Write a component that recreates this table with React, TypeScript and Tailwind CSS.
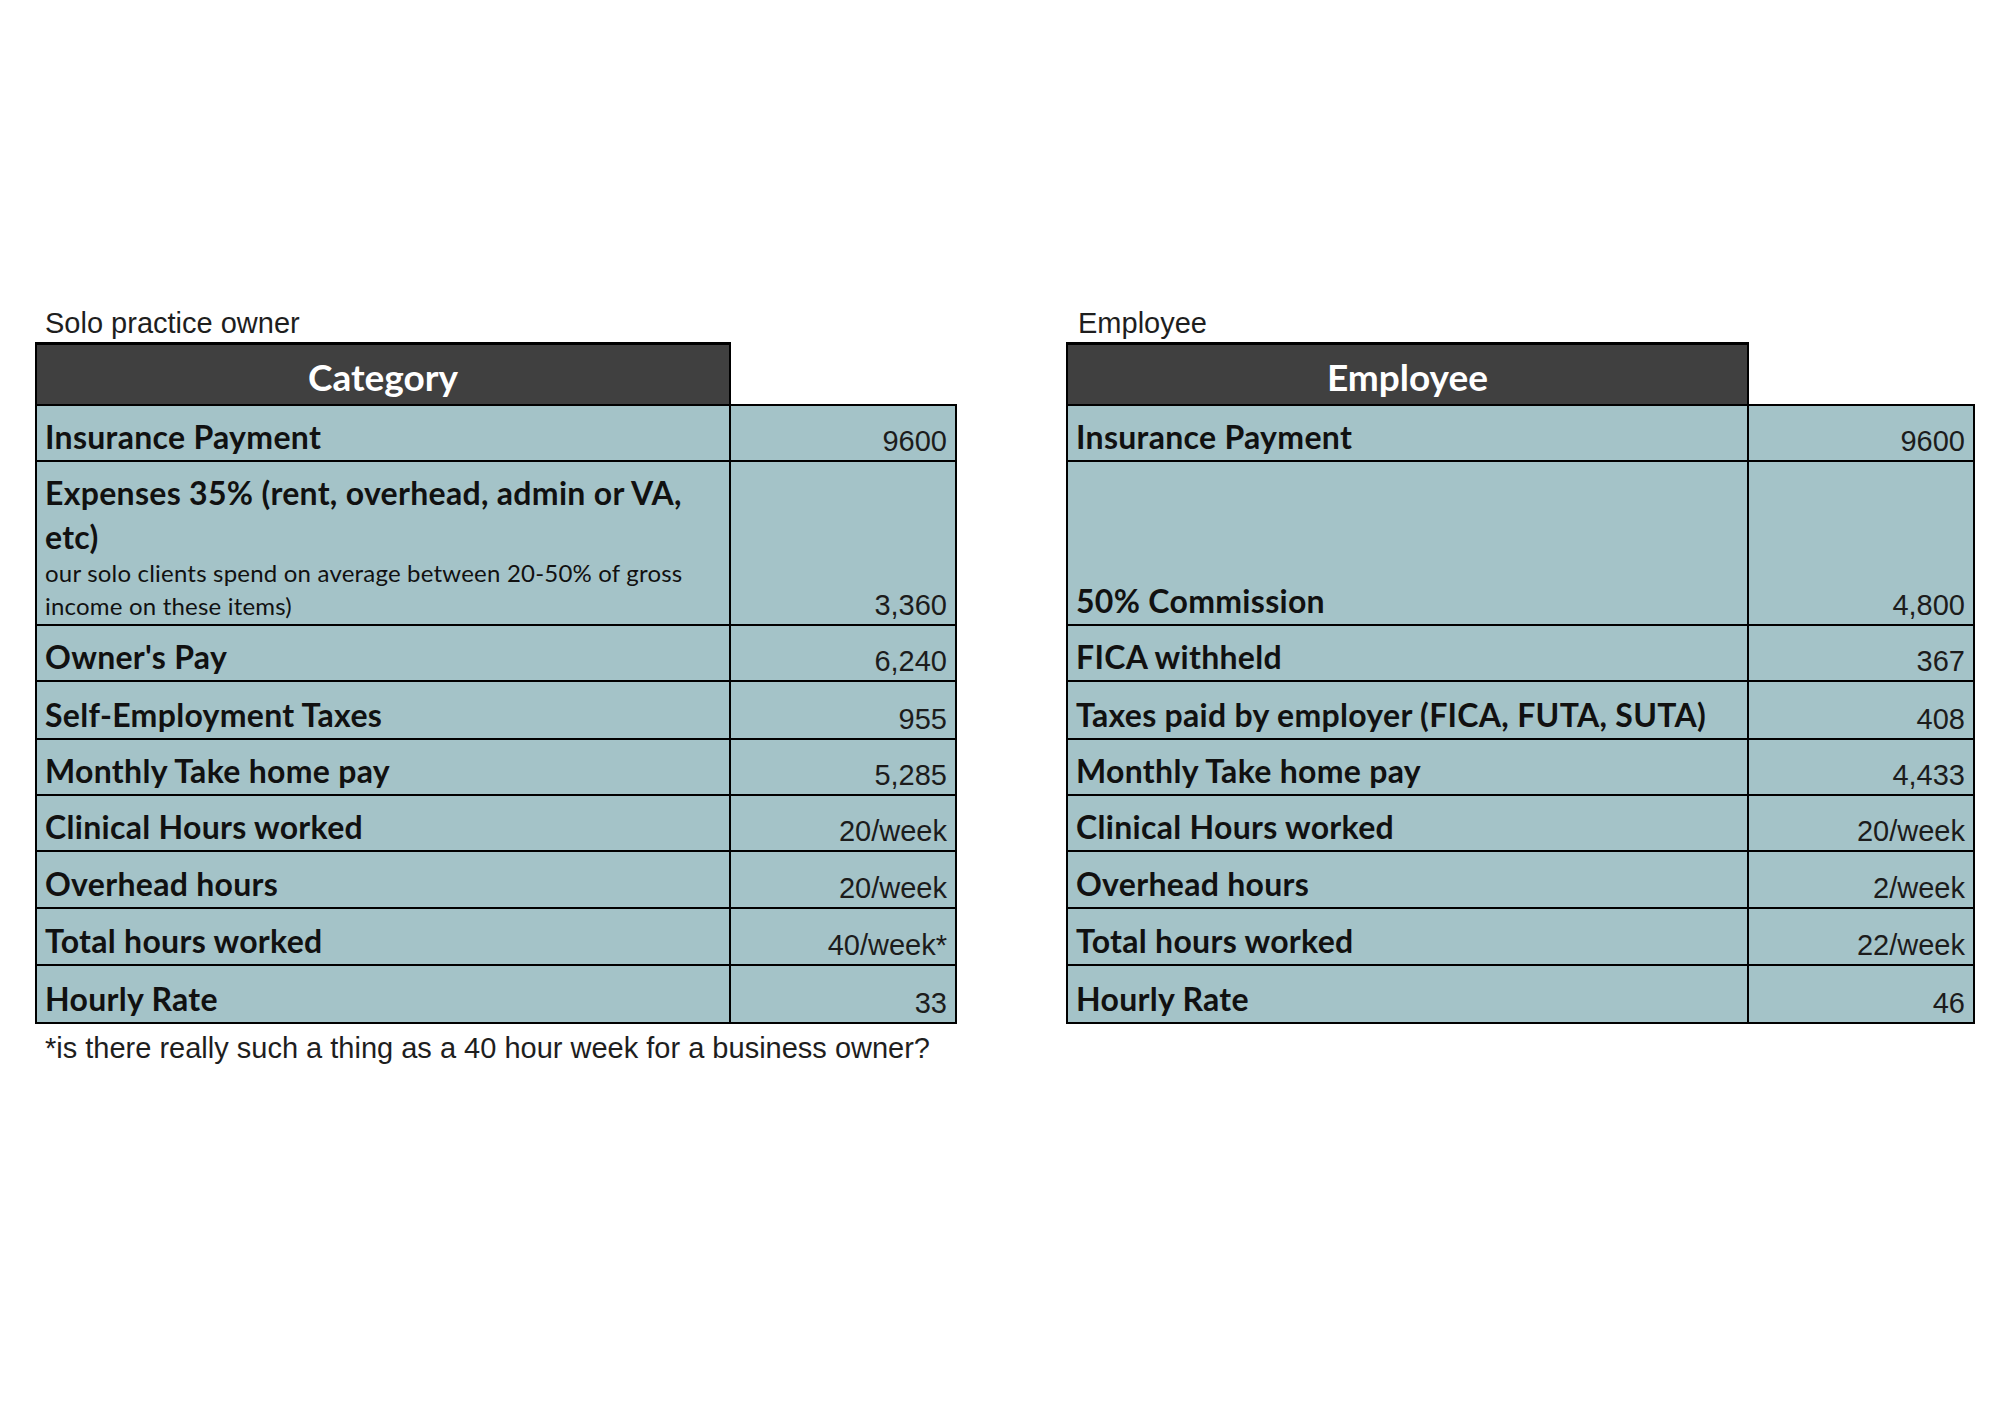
const soloRows = [
  { label: 'Insurance Payment', value: '9600', h: 'h-[58px]' },
  { label: 'Expenses', value: '3,360', h: 'h-[164px]' },
  { label: "Owner's Pay", value: '6,240', h: 'h-[56px]' },
  { label: 'Self-Employment Taxes', value: '955', h: 'h-[58px]' },
  { label: 'Monthly Take home pay', value: '5,285', h: 'h-[56px]' },
  { label: 'Clinical Hours worked', value: '20/week', h: 'h-[56px]' },
  { label: 'Overhead hours', value: '20/week', h: 'h-[57px]' },
  { label: 'Total hours worked', value: '40/week*', h: 'h-[57px]' },
  { label: 'Hourly Rate', value: '33', h: 'h-[58px]' },
]

const employeeRows = [
  { label: 'Insurance Payment', value: '9600', h: 'h-[58px]' },
  { label: '50% Commission', value: '4,800', h: 'h-[164px]' },
  { label: 'FICA withheld', value: '367', h: 'h-[56px]' },
  { label: 'Taxes paid by employer (FICA, FUTA, SUTA)', value: '408', h: 'h-[58px]' },
  { label: 'Monthly Take home pay', value: '4,433', h: 'h-[56px]' },
  { label: 'Clinical Hours worked', value: '20/week', h: 'h-[56px]' },
  { label: 'Overhead hours', value: '2/week', h: 'h-[57px]' },
  { label: 'Total hours worked', value: '22/week', h: 'h-[57px]' },
  { label: 'Hourly Rate', value: '46', h: 'h-[58px]' },
]

const arial = "font-['Liberation_Sans',Arial,sans-serif]"
const calibri = "font-['Lato','Open_Sans',sans-serif]"

function ExpensesLabel() {
  return (
    <div className="flex flex-col">
      <div className="text-[32px] leading-[44px] font-bold tracking-[0.3px] whitespace-nowrap -mb-[3px]">
        Expenses 35% (rent, overhead, admin or VA,
        <br />
        etc)
      </div>
      <div className="text-[24px] leading-[33px] font-normal tracking-[0.2px] whitespace-nowrap">
        our solo clients spend on average between 20-50% of gross
        <br />
        income on these items)
      </div>
    </div>
  )
}

type Row = { label: string; value: string; h: string }

function Sheet({
  caption,
  title,
  rows,
  labelWidth,
  captionPad,
  expenses,
}: {
  caption: string
  title: string
  rows: Row[]
  labelWidth: string
  captionPad: string
  expenses?: boolean
}) {
  return (
    <div className="flex flex-col">
      <div className={`${arial} text-[29px] leading-[29px] h-[34px] pt-[1px] text-[#1e1e1e] ${captionPad}`}>{caption}</div>
      <div className={`${labelWidth} h-[62px] border-t-[3px] border-l-2 border-r-2 border-black bg-[#404040] flex items-center justify-center pt-[4px]`}>
        <span className={`${calibri} text-[37px] leading-[37px] font-bold text-white`}>{title}</span>
      </div>
      <div className="flex flex-col bg-[#a4c3c8]">
        {rows.map((row, i) => (
          <div key={row.label} className={`flex ${row.h} ${i === 0 ? 'border-t-2' : ''} border-b-2 border-black`}>
            <div
              className={`${labelWidth} h-full border-l-2 border-r-2 border-black flex items-end pl-[8px] ${expenses && i === 1 ? 'pb-[2px]' : 'pb-[8px]'} ${calibri} text-[#111111]`}
            >
              {expenses && i === 1 ? (
                <ExpensesLabel />
              ) : (
                <span className="text-[32px] leading-[30px] font-bold tracking-[0.3px] whitespace-nowrap">{row.label}</span>
              )}
            </div>
            <div className={`w-[226px] h-full border-r-2 border-black flex items-end justify-end pr-[8px] pb-[4px] ${arial} text-[29px] leading-[29px] text-[#1c1c1c]`}>
              {row.value}
            </div>
          </div>
        ))}
      </div>
    </div>
  )
}

export default function App() {
  return (
    <div className="w-[2000px] h-[1428px] bg-white pt-[308px] pl-[35px]">
      <div className="flex items-start gap-[109px]">
        <div className="flex flex-col">
          <Sheet
            caption="Solo practice owner"
            title="Category"
            rows={soloRows}
            labelWidth="w-[696px]"
            captionPad="pl-[10px]"
            expenses
          />
          <div className={`${arial} text-[29px] leading-[29px] mt-[10px] pl-[10px] text-[#1e1e1e]`}>
            *is there really such a thing as a 40 hour week for a business owner?
          </div>
        </div>
        <Sheet
          caption="Employee"
          title="Employee"
          rows={employeeRows}
          labelWidth="w-[683px]"
          captionPad="pl-[12px]"
        />
      </div>
    </div>
  )
}
